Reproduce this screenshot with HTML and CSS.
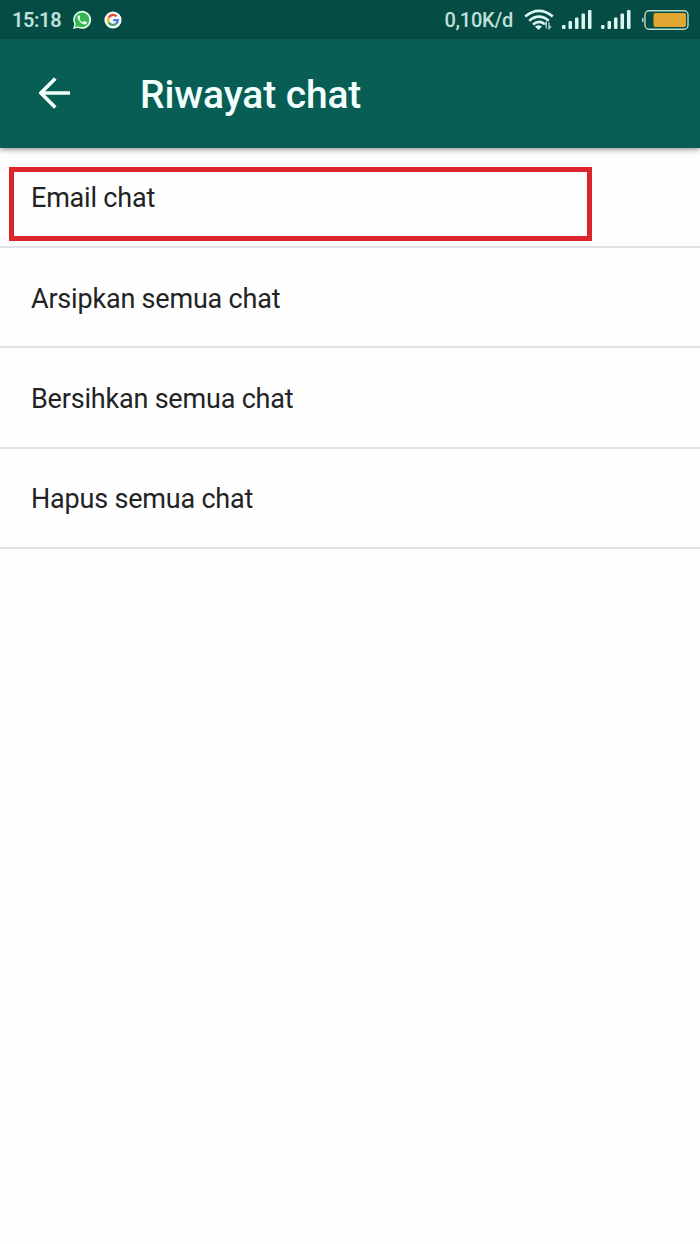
FILE: index.html
```html
<!DOCTYPE html>
<html lang="id">
<head>
<meta charset="utf-8">
<title>Riwayat chat</title>
<link rel="stylesheet" href="styles.css">
</head>
<body>
<div class="status">
  <span class="clock">15:18</span>
  <svg class="whatsapp" width="20" height="20" viewBox="0 0 20 20"><path d="M1 19l1.300-4.800A9 9 0 1 1 5.800 17.700z" fill="#e4fff0"/><path d="M2.900 17.100l.9-3.300A7.300 7.300 0 1 1 6.300 16.200z" fill="#35b653"/><path d="M6.900 5.200c-.9.300-1.500 1.300-1.300 2.400.5 3 3.500 6.200 6.800 6.900 1.200.2 2.400-.6 2.600-1.700l-.2-.6-2.300-1.100-.5.1-1 1.100c-1.700-.7-2.900-1.900-3.600-3.400l.9-1.100-.9-2.400z" fill="#f2fff8"/></svg>
  <svg class="google" width="18" height="18" viewBox="0 0 18 18"><circle cx="9" cy="9" r="8.600" fill="#f4faf9"/><g fill="none" stroke-width="2.300"><path d="M12.600 5.400A4.900 4.900 0 0 0 4.700 6.700" stroke="#e44b40"/><path d="M4.700 6.700a4.900 4.900 0 0 0 0 4.700" stroke="#efb52d"/><path d="M4.700 11.400a4.900 4.900 0 0 0 7.200 1.500" stroke="#43a660"/><path d="M11.900 12.900A4.900 4.900 0 0 0 13.800 9.200H9.200" stroke="#467cdb"/></g></svg>
  <span class="speed">0,10K/d</span>
  <svg class="wifi" width="30" height="22" viewBox="0 0 30 22"><g fill="none" stroke="#dcf7f2" stroke-width="2.600"><path d="M1.200 7.400Q15 -3.800 28.800 7.400"/><path d="M5.200 11.700Q15 3.500 24.800 11.700"/><path d="M9 15.500Q15 10.500 20.500 15"/></g><path d="M11 17.500Q14.500 15 18 17.500L14.500 21z" fill="#dcf7f2"/><path d="M22.300 19.500v-6l-2 2.300M25 13.500v6l2-2.300" fill="none" stroke="#b8ddd7" stroke-width="1.300"/></svg>
  <svg class="signal" width="31" height="20" viewBox="0 0 31 20"><g fill="#dcf7f2"><rect x="0" y="15" width="3.500" height="4" rx="1"/><rect x="6.500" y="11" width="3.500" height="8" rx="1"/><rect x="13" y="7.500" width="3.500" height="11.500" rx="1"/><rect x="19.500" y="3.500" width="3.500" height="15.500" rx="1"/><rect x="26" y="0" width="3.500" height="19" rx="1"/></g></svg>
  <svg class="signal" width="31" height="20" viewBox="0 0 31 20"><g fill="#dcf7f2"><rect x="0" y="15" width="3.500" height="4" rx="1"/><rect x="6.500" y="11" width="3.500" height="8" rx="1"/><rect x="13" y="7.500" width="3.500" height="11.500" rx="1"/><rect x="19.500" y="3.500" width="3.500" height="15.500" rx="1"/><rect x="26" y="0" width="3.500" height="19" rx="1"/></g></svg>
  <svg class="battery" width="48" height="20" viewBox="0 0 48 20"><path d="M2.500 7.500v5Q.8 12.500.8 10T2.500 7.500z" fill="#b5dcd2"/><rect x="4" y=".8" width="43" height="18.400" rx="4" fill="none" stroke="#b5dcc8" stroke-width="1.400"/><rect x="12.500" y="3" width="32.500" height="14" rx="2" fill="#e2a632"/></svg>
</div>
<header class="bar">
  <svg class="back" width="32" height="32" viewBox="0 0 32 32"><path d="M16.300 1.400L1.900 16l14.400 14.600M2.500 16H31" fill="none" stroke="#f2fffc" stroke-width="3.600"/></svg>
  <h1 class="title">Riwayat chat</h1>
</header>
<main class="list">
  <div class="row first"><span class="label">Email chat</span><div class="highlight"></div></div>
  <div class="row"><span class="label">Arsipkan semua chat</span></div>
  <div class="row"><span class="label">Bersihkan semua chat</span></div>
  <div class="row"><span class="label">Hapus semua chat</span></div>
</main>
</body>
</html>
```

FILE: styles.css
```css
* { box-sizing: border-box; }
body { margin: 0; min-height: 1244px; background: #fefefe; font-family: Roboto, sans-serif; color: #212324; }
svg { display: block; flex: none; }
.status { position: relative; z-index: 1; display: flex; align-items: center; height: 39px; padding: 0 11px 0 12px; background: #054d44; color: #bfe0da; font-size: 20px; font-weight: 500; letter-spacing: -.25px; white-space: nowrap; }
.clock { width: 60px; font-weight: 600; letter-spacing: -.4px; }
.google { margin-left: 12px; }
.speed { margin-left: auto; }
.wifi { margin-left: 11px; }
.signal { margin-left: 8px; }
.battery { margin-left: 9px; }
.bar { display: flex; align-items: center; height: 109px; padding: 0 39px; background: #085e55; position: relative; box-shadow: 0 1px 6px rgba(0, 0, 0, .5); }
.back { margin-top: -1px; }
.title { margin: 3px 0 0 69px; font-size: 39px; font-weight: 500; line-height: 48px; letter-spacing: -.13px; color: #f2fffc; }
.row { position: relative; display: flex; align-items: center; height: 100.300px; padding: 3px 31px 0; border-bottom: 2px solid #dfe1e2; }
.row.first { height: 100px; padding-top: 2px; }
.label { font-size: 27px; line-height: 32px; letter-spacing: -.2px; white-space: nowrap; }
.highlight { position: absolute; left: 9px; top: 19px; width: 583px; height: 74px; border: 5px solid #db242c; }
```
